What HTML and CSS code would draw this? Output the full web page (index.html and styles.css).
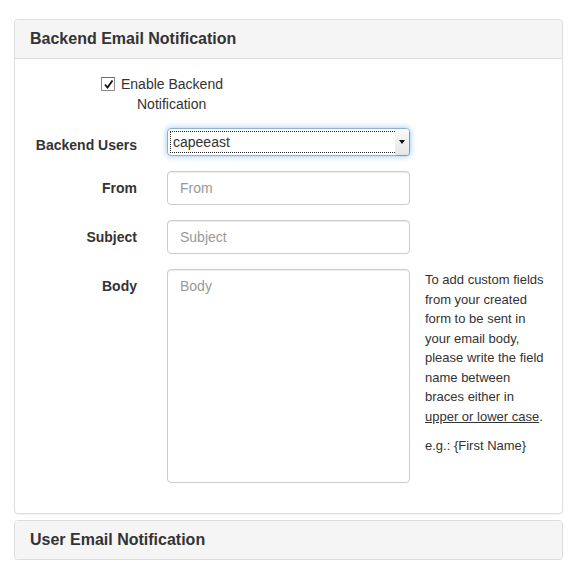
FILE: index.html
```html
<!DOCTYPE html>
<html lang="en">
<head>
    <meta charset="UTF-8">
    <meta name="viewport" content="width=device-width, initial-scale=1.0">
    <title>Email Notifications</title>
    <link rel="stylesheet" href="styles.css">
</head>
<body>
    <div class="panel">
        <div class="panel-heading">Backend Email Notification</div>
        <div class="panel-body">
            <div class="check-row">
                <label class="check">
                    <span class="check-line">
                        <span class="check-box">
                            <svg width="13" height="13" viewBox="0 0 13 13"><path d="M3 6.5 L5.5 9.5 L10.5 2.5" fill="none" stroke="#111" stroke-width="1.8"/></svg>
                        </span>
                        Enable Backend
                    </span>
                    <span class="check-wrap">Notification</span>
                </label>
            </div>

            <div class="form-row">
                <label class="form-label">Backend Users</label>
                <div class="select-wrap">
                    <select class="form-select">
                        <option>capeeast</option>
                    </select>
                    <span class="select-caret"></span>
                </div>
            </div>

            <div class="form-row">
                <label class="form-label">From</label>
                <input type="text" class="form-input" placeholder="From">
            </div>

            <div class="form-row">
                <label class="form-label">Subject</label>
                <input type="text" class="form-input" placeholder="Subject">
            </div>

            <div class="form-row">
                <label class="form-label">Body</label>
                <textarea class="form-input body-area" placeholder="Body"></textarea>
                <div class="help">
                    <p>To add custom fields from your created form to be sent in your email body, please write the field name between braces either in <u>upper or lower case</u>.</p>
                    <p>e.g.: {First Name}</p>
                </div>
            </div>
        </div>
    </div>

    <div class="panel second">
        <div class="panel-heading no-border">User Email Notification</div>
    </div>
</body>
</html>
```
FILE: styles.css
```css
body {
    font-family: 'Liberation Sans', Arial, sans-serif;
    font-size: 14px;
    color: #333;
    background: #fff;
    margin: 0;
    padding: 19px 0 0 14px;
}

/* Panels */
.panel {
    width: 547px;
    border: 1px solid #ddd;
    border-radius: 4px;
    background: #fff;
    box-shadow: 0 1px 1px rgba(0, 0, 0, 0.05);
}

.panel.second {
    margin-top: 6px;
}

.panel-heading {
    background: #f5f5f5;
    border-bottom: 1px solid #ddd;
    border-radius: 3px 3px 0 0;
    padding: 10px 15px;
    font-size: 16px;
    line-height: 18px;
    font-weight: bold;
    color: #333;
}

.panel-heading.no-border {
    border-bottom: none;
    border-radius: 3px;
}

.panel-body {
    padding: 15px;
}

/* Checkbox */
.check-row {
    margin-bottom: 14px;
    padding-left: 71px;
}

.check {
    display: flex;
    flex-direction: column;
    line-height: 20px;
}

.check-line {
    display: flex;
    align-items: center;
}

.check-box {
    display: inline-block;
    width: 12px;
    height: 12px;
    border: 1px solid #8a8a8a;
    border-top-color: #6e6e6e;
    background: #fff;
    margin-right: 6px;
    position: relative;
}

.check-box svg {
    position: absolute;
    left: 0;
    top: 0;
}

.check-wrap {
    padding-left: 36px;
}

/* Form rows */
.form-row {
    display: flex;
    align-items: flex-start;
    margin-bottom: 15px;
}

.form-label {
    flex: 0 0 107px;
    margin-right: 30px;
    text-align: right;
    font-weight: bold;
    padding-top: 7px;
    line-height: 20px;
}

.form-input {
    box-sizing: border-box;
    width: 243px;
    height: 34px;
    padding: 6px 12px;
    font-family: inherit;
    font-size: 14px;
    color: #555;
    border: 1px solid #ccc;
    border-radius: 4px;
    box-shadow: inset 0 1px 1px rgba(0, 0, 0, 0.075);
    outline: none;
    margin: 0;
}

.form-input::placeholder {
    color: #999;
}

.body-area {
    height: 214px;
    resize: none;
    display: block;
    line-height: 20px;
}

/* Select */
.select-wrap {
    position: relative;
    width: 243px;
    height: 28px;
}

.form-select {
    appearance: none;
    -webkit-appearance: none;
    box-sizing: border-box;
    width: 243px;
    height: 28px;
    padding: 0 18px 0 5px;
    font-family: inherit;
    font-size: 14px;
    color: #333;
    background: #fff;
    border: 1px solid #8fb0d0;
    border-radius: 4px;
    box-shadow: 0 0 6px rgba(102, 175, 233, 0.7);
    outline: 1px dotted #222;
    outline-offset: -4px;
}

.select-caret {
    position: absolute;
    right: 1px;
    top: 1px;
    bottom: 1px;
    width: 14px;
    background: linear-gradient(#fafafa, #e6e6e6);
    border-radius: 0 3px 3px 0;
    box-shadow: 1px 1px 1px rgba(0, 0, 0, 0.15);
}

.select-caret::after {
    content: "";
    position: absolute;
    left: 4px;
    top: 11px;
    border-left: 3px solid transparent;
    border-right: 3px solid transparent;
    border-top: 4px solid #111;
}

/* Help text */
.help {
    width: 124px;
    margin-left: 15px;
    margin-right: -2px;
    font-size: 13px;
    line-height: 19.5px;
    color: #333;
    padding-top: 1px;
}

.help p {
    margin: 0 0 10px 0;
}
```
